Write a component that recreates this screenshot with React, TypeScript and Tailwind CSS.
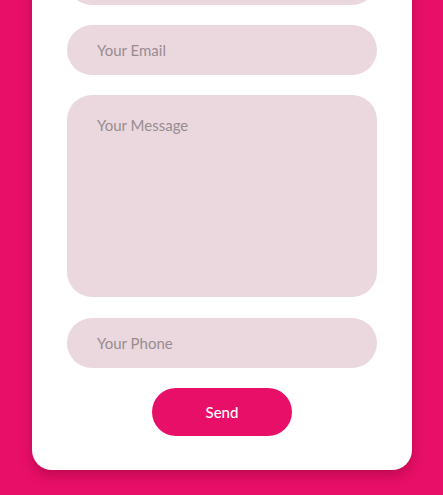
import React from "react";

const fieldClass =
    "w-full rounded-[25px] bg-[#ead8de] px-[30px] text-[15px] text-[#555] placeholder:text-[#978c90] outline-none";

const App = () => {
    return (
        <div
            className="h-[495px] w-[443px] overflow-hidden bg-[#e80f68]"
            style={{ fontFamily: 'Lato, "Noto Sans", sans-serif' }}
        >
            <div className="ml-[32px] mr-[31px] -mt-[65px] flex flex-col gap-[20px] rounded-[20px] bg-white px-[35px] pb-[34px] pt-[20px] shadow-[0_6px_12px_rgba(120,0,40,0.35)]">
                <input className={fieldClass + " h-[50px]"} placeholder="Your Name" />
                <input className={fieldClass + " h-[50px]"} placeholder="Your Email" />
                <textarea
                    className={fieldClass + " h-[202px] resize-none pt-[19px]"}
                    placeholder="Your Message"
                />
                <input className={fieldClass + " mt-px h-[50px]"} placeholder="Your Phone" />
                <div className="flex justify-center">
                    <button className="h-[48px] w-[140px] rounded-full bg-[#e80f68] text-[15px] font-medium text-white">
                        Send
                    </button>
                </div>
            </div>
        </div>
    );
};

export default App;
